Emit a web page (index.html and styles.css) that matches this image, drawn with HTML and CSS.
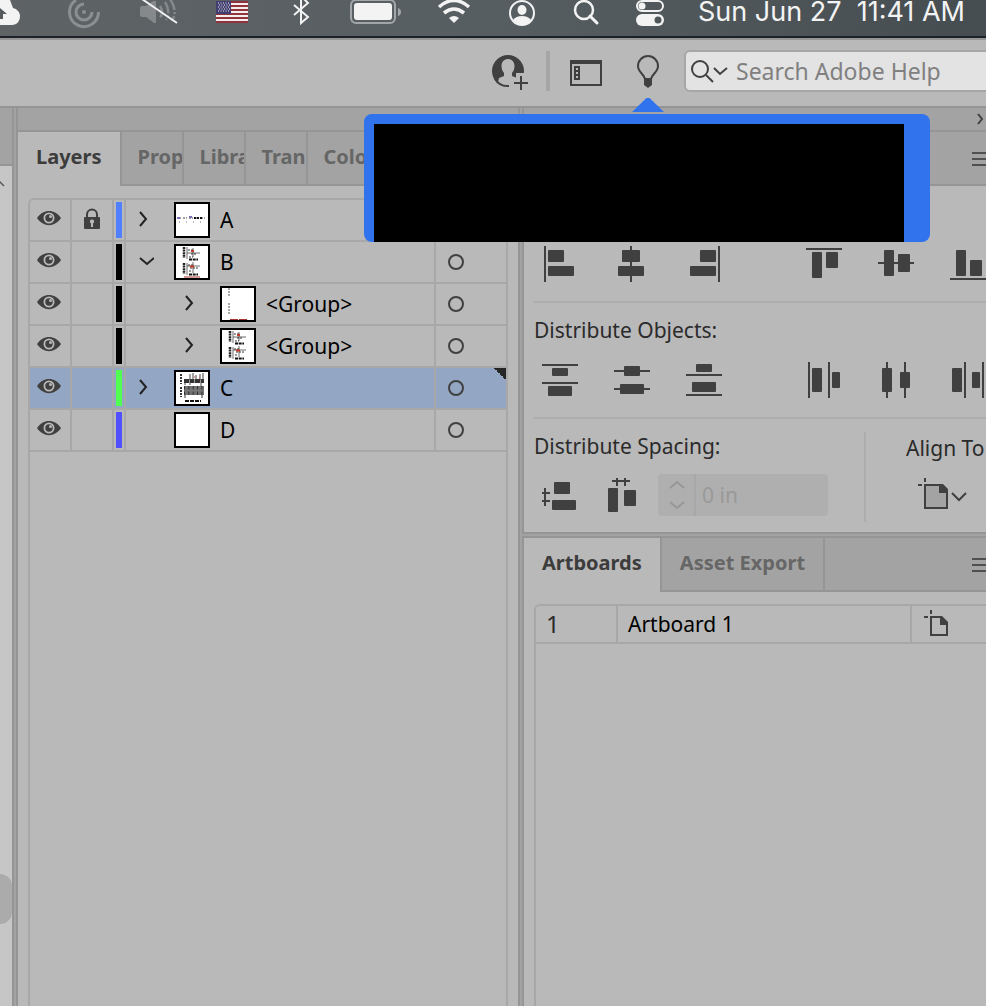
FILE: index.html
```
<!DOCTYPE html>
<html lang="en">
<head>
    <meta charset="UTF-8">
    <meta name="viewport" content="width=device-width, initial-scale=1.0">
    <title>Layers</title>
    <link rel="stylesheet" href="styles.css">
</head>
<body>
    <svg class="defs" aria-hidden="true">
        <symbol id="eye" viewBox="0 0 40 40">
            <path d="M7 18C13 8.500 25 8.500 31 18C25 27.500 13 27.500 7 18Z" fill="#404040"/>
            <circle cx="19" cy="18" r="4.600" fill="#404040" stroke="#b9b9b9" stroke-width="1.800"/>
            <circle cx="20.500" cy="16.600" r="1.500" fill="#b9b9b9"/>
        </symbol>
        <symbol id="lock" viewBox="0 0 40 40">
            <path d="M15 18V14.500a5 5 0 0 1 10 0V18" fill="none" stroke="#404040" stroke-width="2"/>
            <rect x="12" y="17" width="16" height="12" rx="1" fill="#404040"/>
            <path d="M20 19.500a2 2 0 0 1 1 3.800V27h-2v-3.700a2 2 0 0 1 1-3.800z" fill="#b9b9b9"/>
        </symbol>
        <symbol id="right" viewBox="0 0 20 40">
            <path d="M6 12l6 7-6 7" fill="none" stroke="#222" stroke-width="2"/>
        </symbol>
        <symbol id="down" viewBox="0 0 20 40">
            <path d="M6 16l7 6 7-6" fill="none" stroke="#222" stroke-width="2"/>
        </symbol>
        <symbol id="plots" viewBox="0 0 32 32">
            <path d="M8 1v11M8 17v11" stroke="#222" stroke-width="2.500" stroke-dasharray="2 0.600"/>
            <path d="M11 1v12M11 17v12M11 7h13M11 20h13M17 2v9M17 16v11" stroke="#444" stroke-width="0.800"/>
            <path d="M12 4h5M15 8h6M13 11h4M12 19h6M14 22h8M13 25h3" stroke="#333" stroke-dasharray="2 1"/>
            <path d="M13 13.500h9M13 28.500h9" stroke="#111" stroke-width="2" stroke-dasharray="3 0.700"/>
            <path d="M15 5h3M14 20.500h4" stroke="#c43a28" stroke-width="2"/>
        </symbol>
    </svg>

    <header class="menubar">
        <svg width="32" height="36" viewBox="0 0 32 36"><path d="M-6 0H10l3 8c4 1 7 4 7 8 0 5-3 9-8 9H-6z" fill="#f3f3f3"/><path d="M-4 13L0 8l7 6H3v5h-7z" fill="#56595b"/></svg>
        <svg width="40" height="36" viewBox="0 0 40 36" fill="none" stroke="#8b8f91" stroke-width="3"><path d="M12 0a14.500 14.500 0 1 0 22.500 12"/><path d="M20 4a8 8 0 1 0 8 8"/><circle cx="20" cy="12" r="2" fill="#8b8f91" stroke="none"/></svg>
        <svg width="46" height="36" viewBox="0 0 46 36"><path d="M4 8q0-2 2-2h4l7-5h3v22h-2l-8-6H6q-2 0-2-2z" fill="#85898b"/><path d="M24 6q4 6 0 12M29 2q6 9 1 18M34-1q8 11 2 22" fill="none" stroke="#85898b" stroke-width="2.500" stroke-dasharray="12 2 2 2"/><path d="M6-1l35 24" stroke="#f0f0f0" stroke-width="2"/></svg>
        <svg width="36" height="36" viewBox="0 0 36 36"><rect x="2" y="1" width="32" height="22" fill="#f2eeee"/><path d="M2 2h32M2 6h32M2 10h32M2 14h32M2 18h32M2 22h32" stroke="#94313a" stroke-width="2"/><rect x="2" y="1" width="15" height="13" fill="#423e72"/><path d="M4 3h12M5 5h11M4 7h12M5 9h11M4 11h12" stroke="#eee" stroke-dasharray="1 1.500"/></svg>
        <svg width="36" height="36" viewBox="0 0 36 36"><path d="M12 5l14 12-7 6V-4l7 7-14 12" fill="none" stroke="#f3f3f3" stroke-width="2"/></svg>
        <svg width="52" height="36" viewBox="0 0 52 36"><rect x="1" y="0" width="44" height="23" rx="5" fill="none" stroke="#a2a6a8" stroke-width="2"/><rect x="4" y="3" width="38" height="17" rx="3" fill="#f3f3f3"/><path d="M48 8q3 1 3 4t-3 4z" fill="#a2a6a8"/></svg>
        <svg width="40" height="36" viewBox="0 0 40 36"><path d="M5 7q15-13 30 0M10 13q10-8 20 0" fill="none" stroke="#f3f3f3" stroke-width="3.600"/><path d="M15 18q5-4 10 0l-5 5z" fill="#f3f3f3"/></svg>
        <svg width="32" height="36" viewBox="0 0 32 36"><circle cx="16" cy="13" r="12" fill="none" stroke="#f3f3f3" stroke-width="2"/><ellipse cx="16" cy="10" rx="4.500" ry="5" fill="#f3f3f3"/><path d="M7 20q3-4 9-4t9 4q-4 5-9 5t-9-5z" fill="#f3f3f3"/></svg>
        <svg width="32" height="36" viewBox="0 0 32 36"><circle cx="14" cy="10" r="9" fill="none" stroke="#f3f3f3" stroke-width="2.500"/><path d="M20 16l7 7" stroke="#f3f3f3" stroke-width="3" stroke-linecap="round"/></svg>
        <svg width="32" height="36" viewBox="0 0 32 36"><rect x="3" y="1" width="26" height="10" rx="5" fill="none" stroke="#f3f3f3" stroke-width="2"/><circle cx="8" cy="6" r="3.500" fill="#f3f3f3"/><rect x="2" y="14" width="28" height="12" rx="6" fill="#f3f3f3"/><circle cx="24" cy="20" r="3.500" fill="#4e5659"/></svg>
        <time class="clock">Sun Jun 27&nbsp; 11:41 AM</time>
    </header>

    <div class="toolbar">
        <button type="button" aria-label="Share"><svg width="38" height="42" viewBox="0 0 38 42"><circle cx="18" cy="21" r="16" fill="#404040"/><path d="M18 9c4 0 6.500 3 6.500 7 0 3-1 5-2.500 7v3l5 2-2 8c-5 3-12 2-17-4l1-4 5-2v-3c-1.500-2-2.500-4-2.500-7 0-4 2.500-7 6.500-7z" fill="#b9b9b9"/><path d="M5 29q5 8 14 7" fill="none" stroke="#404040" stroke-width="2"/><path d="M21 33v-5h5v-5h12v18H24z" fill="#b9b9b9"/><path d="M24 33h14M31 26v14" stroke="#404040" stroke-width="2"/></svg></button>
        <span class="divider"></span>
        <button type="button" aria-label="Workspace"><svg width="36" height="42" viewBox="0 0 36 42"><rect x="3" y="11" width="30" height="24" fill="none" stroke="#404040" stroke-width="2"/><path d="M2 12h32" stroke="#404040" stroke-width="4"/><path d="M6 16h6v14H6z" fill="#404040"/><path d="M8 18h2v2H8zM8 22h2v2H8zM8 26h2v2H8z" fill="#b9b9b9"/></svg></button>
        <button type="button" aria-label="Learn"><svg width="44" height="42" viewBox="0 0 44 42"><path d="M23 29c-1-5-7-7-7-13a10 10 0 0 1 20 0c0 6-6 8-7 13z" fill="none" stroke="#404040" stroke-width="2"/><path d="M22 28h8v7l-4 3-4-3z" fill="#404040"/></svg></button>
        <label class="search">
            <svg width="40" height="38" viewBox="0 0 40 38" fill="none" stroke="#404040" stroke-width="2"><circle cx="14" cy="17" r="8"/><path d="M20 23l7 7"/><path d="M28 16l6 6 7-6"/></svg>
            <input type="search" placeholder="Search Adobe Help" aria-label="Search Adobe Help">
        </label>
        <div class="tip"><div class="tip-body"></div></div>
    </div>

    <main class="dock">
        <aside class="canvas-edge">
            <div class="edge-head"></div>
            <svg width="12" height="36" viewBox="0 0 12 36"><path d="M-2 14l6 6" stroke="#555" stroke-width="1.500"/></svg>
            <div class="thumb-scroll"></div>
        </aside>

        <section class="panel layers">
            <div class="strip"></div>
            <nav class="tabs">
                <button type="button" class="tab active">Layers</button>
                <button type="button" class="tab narrow">Prop</button>
                <button type="button" class="tab narrow">Libra</button>
                <button type="button" class="tab narrow">Tran</button>
                <button type="button" class="tab narrow">Color</button>
                <span class="tab-fill"></span>
            </nav>
            <ul class="layer-list">
                <li class="layer">
                    <button type="button" class="cell" aria-label="Toggle visibility"><svg><use href="#eye"/></svg></button>
                    <button type="button" class="cell" aria-label="Unlock layer"><svg><use href="#lock"/></svg></button>
                    <span class="cell color"><i class="blue"></i></span>
                    <div class="cell name">
                        <button type="button" class="arrow" aria-label="Expand"><svg><use href="#right"/></svg></button>
                        <svg class="thumb" viewBox="0 0 32 32"><path d="M1 14h29" stroke="#444" stroke-dasharray="2 1 1 2"/><path d="M18 14h8" stroke="#111" stroke-width="2" stroke-dasharray="2 1"/><path d="M1 14h3M13 13h3" stroke="#7770bb" stroke-width="2"/><path d="M3 18h27" stroke="#777" stroke-dasharray="1 6"/></svg>
                        <span>A</span>
                    </div>
                    <button type="button" class="cell target" aria-label="Target layer"><i></i></button>
                </li>
                <li class="layer">
                    <button type="button" class="cell" aria-label="Toggle visibility"><svg><use href="#eye"/></svg></button>
                    <button type="button" class="cell" aria-label="Lock layer"></button>
                    <span class="cell color"><i class="black"></i></span>
                    <div class="cell name">
                        <button type="button" class="arrow" aria-label="Collapse"><svg><use href="#down"/></svg></button>
                        <svg class="thumb" viewBox="0 0 32 32"><use href="#plots"/><path d="M8 31h16" stroke="#a33"/></svg>
                        <span>B</span>
                    </div>
                    <button type="button" class="cell target" aria-label="Target layer"><i></i></button>
                </li>
                <li class="layer">
                    <button type="button" class="cell" aria-label="Toggle visibility"><svg><use href="#eye"/></svg></button>
                    <button type="button" class="cell" aria-label="Lock group"></button>
                    <span class="cell color"><i class="black"></i></span>
                    <div class="cell name nested">
                        <button type="button" class="arrow" aria-label="Expand"><svg><use href="#right"/></svg></button>
                        <svg class="thumb" viewBox="0 0 32 32"><path d="M7 0v8M7 15v11" stroke="#555" stroke-dasharray="2 1"/><path d="M8 31.500h18" stroke="#a33" stroke-dasharray="8 1"/></svg>
                        <span>&lt;Group&gt;</span>
                    </div>
                    <button type="button" class="cell target" aria-label="Target group"><i></i></button>
                </li>
                <li class="layer">
                    <button type="button" class="cell" aria-label="Toggle visibility"><svg><use href="#eye"/></svg></button>
                    <button type="button" class="cell" aria-label="Lock group"></button>
                    <span class="cell color"><i class="black"></i></span>
                    <div class="cell name nested">
                        <button type="button" class="arrow" aria-label="Expand"><svg><use href="#right"/></svg></button>
                        <svg class="thumb" viewBox="0 0 32 32"><use href="#plots"/></svg>
                        <span>&lt;Group&gt;</span>
                    </div>
                    <button type="button" class="cell target" aria-label="Target group"><i></i></button>
                </li>
                <li class="layer selected">
                    <button type="button" class="cell" aria-label="Toggle visibility"><svg><use href="#eye"/></svg></button>
                    <button type="button" class="cell" aria-label="Lock layer"></button>
                    <span class="cell color"><i class="green"></i></span>
                    <div class="cell name">
                        <button type="button" class="arrow" aria-label="Expand"><svg><use href="#right"/></svg></button>
                        <svg class="thumb" viewBox="0 0 32 32"><path d="M5 2v10M5 15v10" stroke="#333" stroke-width="2" stroke-dasharray="2 1"/><path d="M8 9h20" stroke="#333" stroke-width="4" stroke-dasharray="5 0.500"/><path d="M14 2v6M17 1v7M20 3v5M24 2v6M27 1v7M9 11v2M14 11v2M25 11v3" stroke="#444"/><path d="M8 16h20M8 21h20" stroke="#333" stroke-width="4" stroke-dasharray="1 0.300"/><path d="M8 18.500h20" stroke="#777" stroke-width="2"/><path d="M9 23v3M26 23v3" stroke="#333"/><path d="M9 29h16" stroke="#111" stroke-width="2" stroke-dasharray="4 1"/><path d="M18 5h1M23 6h1" stroke="#c43"/></svg>
                        <span>C</span>
                    </div>
                    <button type="button" class="cell target" aria-label="Target layer"><i></i></button>
                </li>
                <li class="layer">
                    <button type="button" class="cell" aria-label="Toggle visibility"><svg><use href="#eye"/></svg></button>
                    <button type="button" class="cell" aria-label="Lock layer"></button>
                    <span class="cell color"><i class="violet"></i></span>
                    <div class="cell name">
                        <span class="arrow"></span>
                        <svg class="thumb" viewBox="0 0 32 32"></svg>
                        <span>D</span>
                    </div>
                    <button type="button" class="cell target" aria-label="Target layer"><i></i></button>
                </li>
            </ul>
        </section>

        <div class="side">
            <section class="panel align">
                <div class="strip"><svg width="10" height="22" viewBox="0 0 10 22"><path d="M2 6l4 5-4 5" fill="none" stroke="#404040" stroke-width="2"/></svg></div>
                <div class="tabs"><span class="tab-fill"></span><button type="button" class="menu" aria-label="Panel menu"><svg width="14" height="54" viewBox="0 0 14 54"><path d="M0 21h14M0 27h14M0 33h14" stroke="#505050" stroke-width="2"/></svg></button></div>
                <div class="align-body">
                    <div class="icon-row">
                        <div class="icons">
                            <button type="button" aria-label="Align left"><svg><path d="M3 0v36" class="line"/><rect x="6" y="4" width="16" height="12" rx="1"/><rect x="6" y="20" width="26" height="10" rx="1"/></svg></button>
                            <button type="button" aria-label="Align center"><svg><path d="M17 0v36" class="line"/><rect x="8" y="4" width="18" height="12" rx="1"/><rect x="4" y="20" width="26" height="10" rx="1"/></svg></button>
                            <button type="button" aria-label="Align right"><svg><path d="M33 0v36" class="line"/><rect x="14" y="4" width="16" height="12" rx="1"/><rect x="4" y="20" width="26" height="10" rx="1"/></svg></button>
                        </div>
                        <div class="icons">
                            <button type="button" aria-label="Align top"><svg><path d="M0 3h36" class="line"/><rect x="6" y="6" width="10" height="26" rx="1"/><rect x="20" y="6" width="12" height="16" rx="1"/></svg></button>
                            <button type="button" aria-label="Align middle"><svg><path d="M0 17h36" class="line"/><rect x="6" y="4" width="10" height="26" rx="1"/><rect x="20" y="8" width="12" height="18" rx="1"/></svg></button>
                            <button type="button" aria-label="Align bottom"><svg><path d="M0 33h36" class="line"/><rect x="6" y="4" width="10" height="26" rx="1"/><rect x="20" y="14" width="12" height="16" rx="1"/></svg></button>
                        </div>
                    </div>
                    <hr>
                    <h2>Distribute Objects:</h2>
                    <div class="icon-row">
                        <div class="icons">
                            <button type="button" aria-label="Distribute top"><svg><path d="M0 3h36M0 21h36" class="line"/><rect x="10" y="6" width="16" height="8" rx="1"/><rect x="6" y="24" width="24" height="10" rx="1"/></svg></button>
                            <button type="button" aria-label="Distribute middle"><svg><path d="M0 9h36M0 27h36" class="line"/><rect x="10" y="4" width="16" height="10" rx="1"/><rect x="6" y="22" width="24" height="10" rx="1"/></svg></button>
                            <button type="button" aria-label="Distribute bottom"><svg><path d="M0 13h36M0 33h36" class="line"/><rect x="10" y="2" width="16" height="8" rx="1"/><rect x="6" y="20" width="24" height="10" rx="1"/></svg></button>
                        </div>
                        <div class="icons">
                            <button type="button" aria-label="Distribute left"><svg><path d="M3 0v36M23 0v36" class="line"/><rect x="6" y="6" width="10" height="24" rx="1"/><rect x="26" y="10" width="8" height="16" rx="1"/></svg></button>
                            <button type="button" aria-label="Distribute center"><svg><path d="M9 0v36M27 0v36" class="line"/><rect x="4" y="6" width="10" height="24" rx="1"/><rect x="22" y="10" width="10" height="16" rx="1"/></svg></button>
                            <button type="button" aria-label="Distribute right"><svg><path d="M15 0v36M33 0v36" class="line"/><rect x="2" y="6" width="10" height="24" rx="1"/><rect x="22" y="10" width="8" height="16" rx="1"/></svg></button>
                        </div>
                    </div>
                    <hr>
                    <div class="spacing">
                        <div class="spacing-main">
                            <h2>Distribute Spacing:</h2>
                            <div class="spacing-row">
                                <button type="button" aria-label="Vertical spacing"><svg><path d="M3 11v18M0 16h8M0 24h8" class="line"/><rect x="12" y="5" width="16" height="12" rx="1"/><rect x="10" y="23" width="24" height="10" rx="1"/></svg></button>
                                <button type="button" aria-label="Horizontal spacing"><svg><path d="M6 4h18M11 1v8M19 1v8" class="line"/><rect x="2" y="11" width="10" height="24" rx="1"/><rect x="18" y="13" width="12" height="16" rx="1"/></svg></button>
                                <label class="amount">
                                    <svg width="36" height="42" viewBox="0 0 36 42"><path d="M12 14l7-6 7 6M12 28l7 6 7-6" fill="none" stroke="#979797" stroke-width="2"/></svg>
                                    <input type="text" value="0 in" aria-label="Spacing" disabled>
                                </label>
                            </div>
                        </div>
                        <div class="align-to">
                            <h2>Align To</h2>
                            <button type="button" aria-label="Align to artboard"><svg class="wide" viewBox="0 0 52 42"><path d="M7 13h15l7 7v16H7z" fill="#a3a3a3" stroke="#404040" stroke-width="2"/><path d="M21 12h4l5 5v4h-9z" fill="#404040"/><path d="M0 13h4M7 6v4" stroke="#404040" stroke-width="2"/><path d="M34 21l7 7 7-7" fill="none" stroke="#404040" stroke-width="2"/></svg></button>
                        </div>
                    </div>
                </div>
            </section>

            <section class="panel artboards">
                <nav class="tabs">
                    <button type="button" class="tab active">Artboards</button>
                    <button type="button" class="tab">Asset Export</button>
                    <span class="tab-fill"></span>
                    <button type="button" class="menu" aria-label="Panel menu"><svg width="14" height="54" viewBox="0 0 14 54"><path d="M0 21h14M0 27h14M0 33h14" stroke="#505050" stroke-width="2"/></svg></button>
                </nav>
                <div class="board-list">
                    <table>
                        <tr>
                            <td class="num">1</td>
                            <td class="title">Artboard 1</td>
                            <td class="page"><svg width="28" height="30" viewBox="0 0 28 30"><path d="M7 8h10l6 6v12H7z" fill="none" stroke="#404040" stroke-width="2"/><path d="M16 7h2l6 6v3h-8z" fill="#404040"/><path d="M0 8h4M7 1v4" stroke="#404040" stroke-width="2"/></svg></td>
                        </tr>
                    </table>
                </div>
            </section>
        </div>
    </main>
</body>
</html>
```
FILE: styles.css
```
* {
    box-sizing: border-box;
}
body {
    margin: 0;
    height: 100vh;
    display: flex;
    flex-direction: column;
    overflow: hidden;
    background-color: #b9b9b9;
    color: #2b2b2b;
    font-family: "Noto Sans", "Open Sans", sans-serif;
    font-size: 21px;
}
button {
    margin: 0;
    padding: 0;
    border: 0;
    background: none;
    color: inherit;
    font: inherit;
}
svg {
    display: block;
    flex: none;
}
.defs {
    display: none;
}

/* menu bar */
.menubar {
    flex: none;
    display: flex;
    gap: 32px;
    height: 38px;
    background: linear-gradient(90deg, #5f6366, #565e61 50%, #454d51);
    border-bottom: 2px solid #1d2228;
}
.clock {
    color: #f3f3f3;
    font-family: Inter, "Liberation Sans", sans-serif;
    font-size: 27px;
    line-height: 24px;
    white-space: nowrap;
}

/* toolbar */
.toolbar {
    position: relative;
    flex: none;
    display: flex;
    align-items: center;
    justify-content: flex-end;
    gap: 18px;
    height: 70px;
    padding-bottom: 4px;
    border-top: 2px solid #959595;
    border-bottom: 2px solid #959595;
}
.divider {
    width: 4px;
    height: 40px;
    background: #a6a6a6;
}
.search {
    display: flex;
    align-items: center;
    width: 312px;
    height: 42px;
    margin-right: -10px;
    border: 2px solid #a6a6a6;
    border-radius: 6px;
    background: #e3e3e3;
}
.search svg {
    overflow: visible;
}
.search input {
    flex: 1;
    min-width: 0;
    padding: 0 0 0 10px;
    border: 0;
    outline: 0;
    background: none;
    font: inherit;
    font-size: 23px;
}
.search input::placeholder {
    color: #808080;
}
.tip {
    position: absolute;
    z-index: 10;
    top: 74px;
    right: 56px;
    width: 566px;
    height: 128px;
    padding: 10px 26px 0 10px;
    border-radius: 8px;
    background: #3073ec;
}
.tip::before {
    content: "";
    position: absolute;
    top: -16px;
    left: 268px;
    width: 32px;
    height: 14px;
    background: #3073ec;
    clip-path: polygon(45% 0, 55% 0, 100% 100%, 0 100%);
}
.tip-body {
    height: 100%;
    background: #000;
}

/* panels */
.dock {
    flex: 1;
    min-height: 0;
    display: grid;
    grid-template-columns: 14px minmax(0, 504fr) minmax(0, 464fr);
    gap: 2px;
    background: #a3a3a3;
}
.canvas-edge {
    display: flex;
    flex-direction: column;
    background: #c6c6c6;
    border-right: 2px solid #959595;
}
.edge-head {
    height: 58px;
    background: #a3a3a3;
    border-bottom: 2px solid #959595;
}
.thumb-scroll {
    height: 50px;
    margin-top: auto;
    margin-bottom: 82px;
    border-radius: 0 12px 12px 0;
    background: #ababab;
}
.panel {
    background: #b9b9b9;
    border-left: 2px solid #959595;
}
.layers {
    display: flex;
    flex-direction: column;
    border-right: 2px solid #959595;
}
.strip {
    flex: none;
    display: flex;
    justify-content: flex-end;
    height: 24px;
    background: #a3a3a3;
    border-bottom: 2px solid #959595;
}
.tabs {
    flex: none;
    display: flex;
    height: 54px;
    font-size: 20px;
}
.tab {
    padding: 0 16px 4px;
    overflow: hidden;
    background: #a3a3a3;
    border-right: 2px solid #959595;
    border-bottom: 2px solid #959595;
    color: #666;
    font-weight: bold;
    white-space: nowrap;
}
.tab.active {
    padding: 0 18px 6px;
    background: #b9b9b9;
    border-bottom: 0;
    color: #3c3c3c;
}
.tab.narrow {
    width: 62px;
    padding-right: 0;
    text-align: left;
}
.artboards .tab {
    padding-left: 18px;
    padding-right: 18px;
}
.tab-fill {
    flex: 1;
    background: #a3a3a3;
    border-bottom: 2px solid #959595;
}
.menu {
    background: #a3a3a3;
    border-bottom: 2px solid #959595;
}

/* layers */
.layer-list {
    flex: 1;
    margin: 12px 10px 0;
    padding: 0;
    list-style: none;
    border: 2px solid #a8a8a8;
    border-bottom: 0;
    border-radius: 6px 6px 0 0;
}
.layer {
    display: grid;
    grid-template-columns: 42px 42px 12px minmax(0, 1fr) 70px;
    height: 42px;
    border-bottom: 2px solid #a8a8a8;
    color: #000;
}
.cell {
    display: flex;
    align-items: center;
    height: 40px;
    border-right: 2px solid #a8a8a8;
}
button.cell > svg {
    width: 40px;
    height: 40px;
}
.color {
    justify-content: center;
}
.color i {
    width: 6px;
    height: 36px;
}
.blue {
    background: #5080ff;
}
.black {
    background: #000;
}
.green {
    background: #50ff50;
}
.violet {
    background: #5050ff;
}
.name {
    padding-left: 8px;
}
.nested {
    padding-left: 54px;
}
.arrow,
.arrow svg {
    width: 20px;
    height: 40px;
    overflow: visible;
}
.thumb {
    width: 36px;
    height: 36px;
    margin: 0 10px 0 20px;
    border: 2px solid #000;
    background: #fff;
}
.target {
    padding-left: 12px;
    border-right: 0;
}
.target i {
    width: 16px;
    height: 16px;
    border: 2px solid #404040;
    border-radius: 50%;
}
.selected {
    background: linear-gradient(45deg, transparent 50%, #262626 50%) top right / 12px 12px no-repeat #93a6c3;
}

/* align */
.side {
    display: flex;
    flex-direction: column;
    gap: 2px;
}
.align {
    border-bottom: 2px solid #959595;
}
.align-body {
    padding: 60px 0 10px 10px;
}
.align-body button svg {
    width: 36px;
    height: 36px;
    fill: #404040;
    overflow: visible;
}
.line {
    stroke: #404040;
    stroke-width: 2px;
}
.icon-row {
    display: flex;
    gap: 84px;
    padding-left: 8px;
}
.icons {
    display: flex;
    gap: 36px;
}
hr {
    height: 2px;
    margin: 19px 0 13px;
    border: 0;
    background: #adadad;
}
h2 {
    margin: 0;
    font-size: 21px;
    font-weight: normal;
    line-height: 28px;
    white-space: nowrap;
}
h2 + .icon-row {
    margin-top: 18px;
}
.spacing {
    display: grid;
    grid-template-columns: 330px minmax(0, 1fr);
}
.spacing-row {
    display: flex;
    align-items: center;
    gap: 28px;
    height: 42px;
    margin-top: 14px;
    padding-left: 8px;
}
.amount {
    display: flex;
    width: 170px;
    height: 42px;
    margin-left: -12px;
    border-radius: 4px;
    background: #afafaf;
}
.amount input {
    flex: 1;
    min-width: 0;
    padding: 0 0 0 6px;
    border: 0;
    border-left: 2px solid #a8a8a8;
    background: none;
    color: #999;
    font: inherit;
}
.align-to {
    height: 90px;
    padding: 2px 0 0 40px;
    border-left: 2px solid #adadad;
}
.align-to button {
    margin: 10px 0 0 12px;
}
.align-body .align-to .wide {
    width: 52px;
    height: 42px;
    fill: none;
}

/* artboards */
.artboards {
    flex: 1;
    display: flex;
    flex-direction: column;
    border-top: 2px solid #959595;
}
.board-list {
    flex: 1;
    margin: 12px 0 0 10px;
    border: 2px solid #a8a8a8;
    border-right: 0;
    border-bottom: 0;
    border-radius: 6px 0 0 0;
}
table {
    width: 100%;
    border-spacing: 0;
}
td {
    height: 38px;
    padding: 0;
    border-bottom: 2px solid #a8a8a8;
}
.num {
    width: 82px;
    padding-left: 10px;
    border-right: 2px solid #a8a8a8;
    font-size: 24px;
    line-height: 30px;
}
.title {
    padding-left: 10px;
    border-right: 2px solid #a8a8a8;
    color: #000;
}
.page {
    width: 74px;
    padding-left: 12px;
}
```
